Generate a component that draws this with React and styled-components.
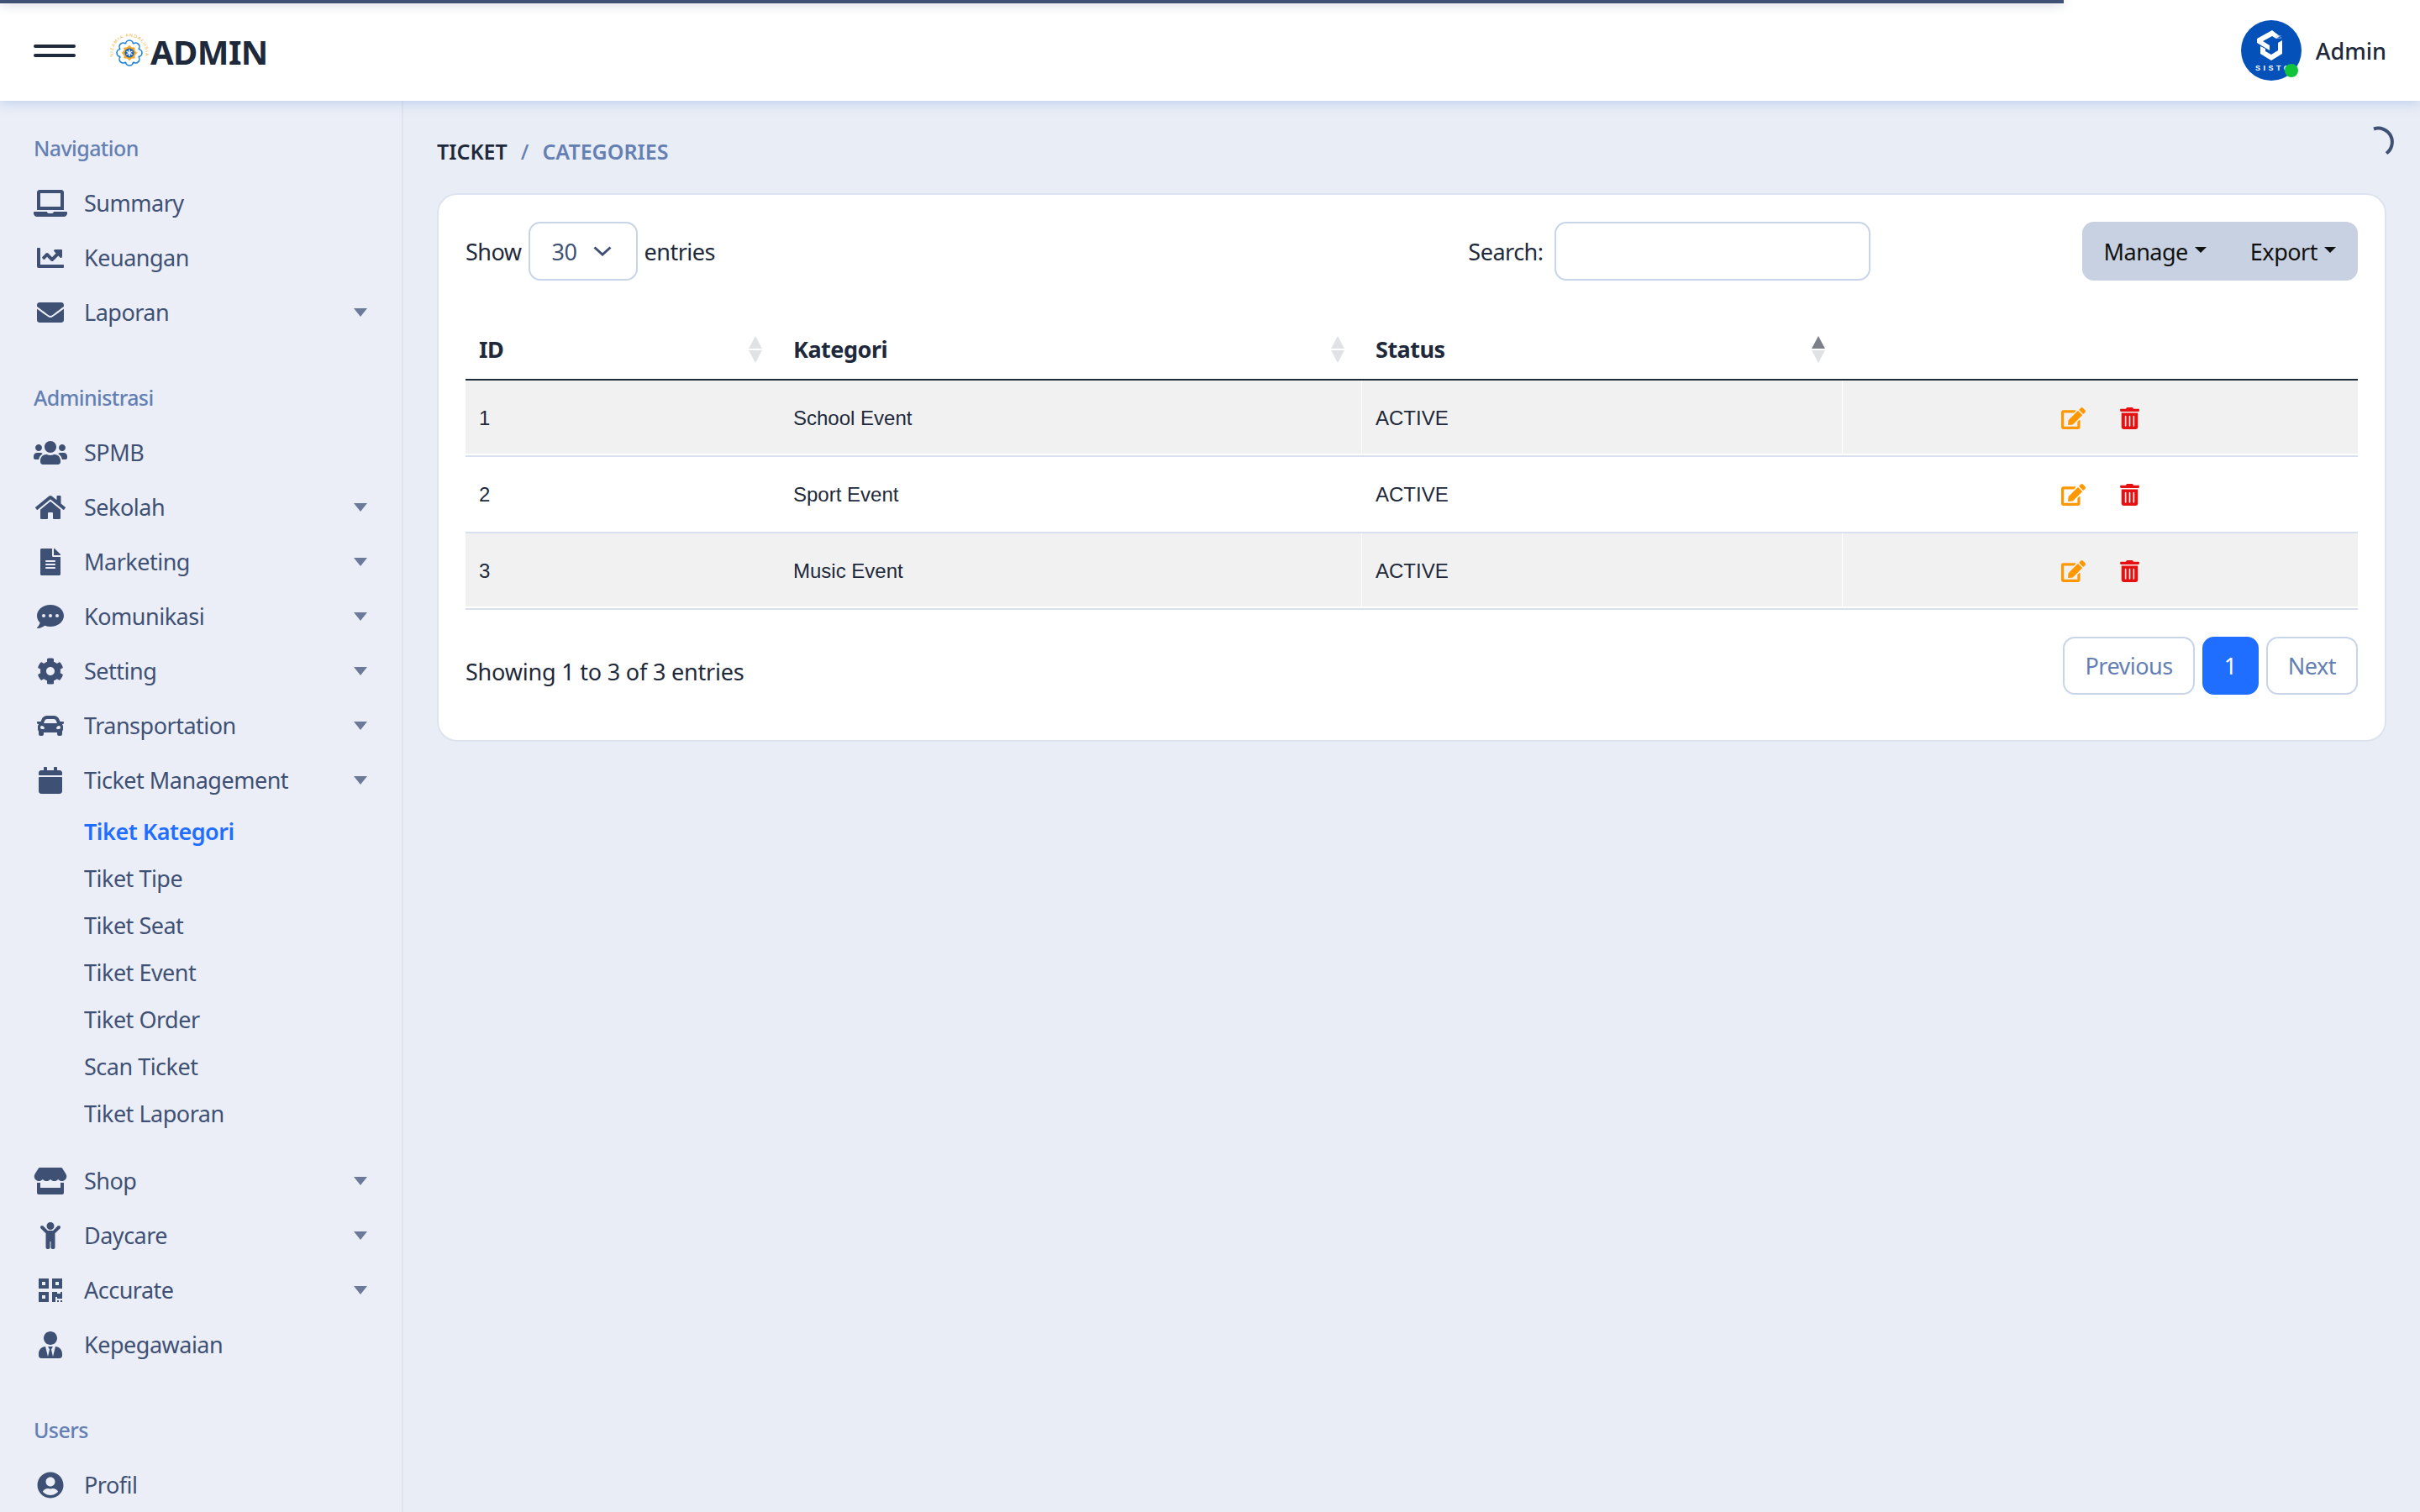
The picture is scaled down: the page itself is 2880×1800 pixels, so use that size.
import React from 'react'
import styled, { createGlobalStyle } from 'styled-components'
import {
  FaLaptop, FaChartLine, FaEnvelope, FaUsers, FaHome, FaFileAlt, FaCommentDots, FaCog, FaCar,
  FaCalendar, FaStore, FaChild, FaQrcode, FaUserTie, FaUserCircle, FaEdit, FaTrashAlt,
} from 'react-icons/fa'

const FONT = '"Noto Sans", "Open Sans", sans-serif'
const INK = '#1e293b'
const NAVY = '#3e5175'
const SLATE = '#6480b3'
const LINE = '#c8d4e8'

const navigation = [
  { label: 'Summary', icon: FaLaptop },
  { label: 'Keuangan', icon: FaChartLine },
  { label: 'Laporan', icon: FaEnvelope, caret: true },
]

const administrasi = [
  { label: 'SPMB', icon: FaUsers },
  { label: 'Sekolah', icon: FaHome, caret: true },
  { label: 'Marketing', icon: FaFileAlt, caret: true },
  { label: 'Komunikasi', icon: FaCommentDots, caret: true },
  { label: 'Setting', icon: FaCog, caret: true },
  { label: 'Transportation', icon: FaCar, caret: true },
  { label: 'Ticket Management', icon: FaCalendar, caret: true },
]

const tickets = ['Tiket Kategori', 'Tiket Tipe', 'Tiket Seat', 'Tiket Event', 'Tiket Order', 'Scan Ticket', 'Tiket Laporan']

const others = [
  { label: 'Shop', icon: FaStore, caret: true },
  { label: 'Daycare', icon: FaChild, caret: true },
  { label: 'Accurate', icon: FaQrcode, caret: true },
  { label: 'Kepegawaian', icon: FaUserTie },
]

const rows = [
  { id: 1, name: 'School Event' },
  { id: 2, name: 'Sport Event' },
  { id: 3, name: 'Music Event' },
]

const NavItem = ({ item }) => {
  const Icon = item.icon
  return (
    <Item>
      <IconSlot><Icon /></IconSlot>
      <ItemLabel>{item.label}</ItemLabel>
      {item.caret && <Caret />}
    </Item>
  )
}

const Logo = () => (
  <LogoSvg viewBox="0 0 48 40">
    <defs>
      <path id="logoArc" d="M4 27.500 A19.500 19.500 0 1 1 42 27.500" />
    </defs>
    <text fontFamily="Liberation Sans, sans-serif" fontSize="5.200" fill="#f5a623">
      <textPath href="#logoArc" textLength="68">NIZAMIA ANDALUSIA</textPath>
    </text>
    {[0, 45, 90, 135, 180, 225, 270, 315].map(a => (
      <circle key={a} cx="23" cy="12.500" r="4.500" fill="#fff" stroke="#1b82d6" strokeWidth="1.600" transform={`rotate(${a} 23 23)`} />
    ))}
    <circle cx="23" cy="23" r="11.500" fill="#fff" />
    <rect x="16.500" y="16.500" width="13" height="13" fill="#f5a623" />
    <rect x="16.500" y="16.500" width="13" height="13" fill="#f5a623" transform="rotate(45 23 23)" />
    <circle cx="23" cy="23" r="5.500" fill="#1565c0" />
    <path d="M23 19 v8 M19.500 21 l7 4 M26.500 21 l-7 4" stroke="#fff" strokeWidth="1.400" />
  </LogoSvg>
)

const AvatarMark = () => (
  <AvatarSvg viewBox="0 0 72 72">
    <path d="M37 12 L19 22 V27 L34 36 V30 L26 25 L37 19 L42 22 L46 19 z" fill="#fff" />
    <path d="M23 31 V40 L36 48 L49 40 V24 L44 27 V36 L36 41 L29 37 V34 z" fill="#fff" />
    <text x="41" y="22" fontFamily="Liberation Sans, sans-serif" fontSize="5" fill="#a9c4ee">SIS</text>
    <text x="17" y="60" fontFamily="Liberation Sans, sans-serif" fontSize="9" fontWeight="700" letterSpacing="3.500" fill="#fff">SISTO</text>
  </AvatarSvg>
)

const App = () => (
  <>
    <GlobalStyle />
    <ProgressBar />
    <Spinner viewBox="0 0 40 40">
      <path d="M9 6.500 A16.500 16.500 0 0 1 24 35.500" fill="none" stroke={NAVY} strokeWidth="4" />
    </Spinner>
    <Page>
      <Header>
        <HeaderLeft>
          <Burger><span /><span /></Burger>
          <Brand>
            <Logo />
            <BrandName>ADMIN</BrandName>
          </Brand>
        </HeaderLeft>
        <UserBox>
          <Avatar>
            <AvatarMark />
            <OnlineDot />
          </Avatar>
          <UserName>Admin</UserName>
        </UserBox>
      </Header>
      <Body>
        <Sidebar>
          <SectionLabel>Navigation</SectionLabel>
          {navigation.map(item => <NavItem key={item.label} item={item} />)}
          <SectionLabel $gap={52}>Administrasi</SectionLabel>
          {administrasi.map(item => <NavItem key={item.label} item={item} />)}
          <SubMenu>
            {tickets.map((label, i) => <SubItem key={label} $active={i === 0}>{label}</SubItem>)}
          </SubMenu>
          {others.map(item => <NavItem key={item.label} item={item} />)}
          <SectionLabel $gap={52}>Users</SectionLabel>
          <NavItem item={{ label: 'Profil', icon: FaUserCircle }} />
        </Sidebar>
        <Content>
          <Breadcrumb>
            <Crumb>TICKET</Crumb>
            <CrumbSep>/</CrumbSep>
            <CrumbNow>CATEGORIES</CrumbNow>
          </Breadcrumb>
          <Card>
            <Controls>
              <LengthBox>
                <span>Show</span>
                <SelectBox>
                  <span>30</span>
                  <Chevron viewBox="0 0 22 12">
                    <path d="M1.500 1.500 L11 10 L20.500 1.500" fill="none" stroke={NAVY} strokeWidth="3" />
                  </Chevron>
                </SelectBox>
                <span>entries</span>
              </LengthBox>
              <SearchBox>
                <span>Search:</span>
                <SearchInput />
              </SearchBox>
              <ButtonGroup>
                <GroupButton>Manage<ButtonCaret /></GroupButton>
                <GroupButton>Export<ButtonCaret /></GroupButton>
              </ButtonGroup>
            </Controls>
            <Table>
              <colgroup>
                <col style={{ width: 374 }} />
                <col style={{ width: 693 }} />
                <col style={{ width: 572 }} />
                <col />
              </colgroup>
              <thead>
                <tr>
                  <Th><HeadCell>ID<SortArrows /></HeadCell></Th>
                  <Th><HeadCell>Kategori<SortArrows /></HeadCell></Th>
                  <Th><HeadCell>Status<SortArrows $asc /></HeadCell></Th>
                  <Th />
                </tr>
              </thead>
              <tbody>
                {rows.map(row => (
                  <Row key={row.id} $striped={row.id % 2 === 1}>
                    <Td>{row.id}</Td>
                    <Td>{row.name}</Td>
                    <Td>ACTIVE</Td>
                    <Td>
                      <Actions>
                        <EditIcon />
                        <TrashIcon />
                      </Actions>
                    </Td>
                  </Row>
                ))}
              </tbody>
            </Table>
            <TableFooter>
              <TableInfo>Showing 1 to 3 of 3 entries</TableInfo>
              <Pagination>
                <PageButton>Previous</PageButton>
                <PageButton $active>1</PageButton>
                <PageButton>Next</PageButton>
              </Pagination>
            </TableFooter>
          </Card>
        </Content>
      </Body>
    </Page>
  </>
)

const GlobalStyle = createGlobalStyle`
  html, body {
    margin: 0;
    padding: 0;
    background: #e9edf6;
  }
  * {
    box-sizing: border-box;
  }
  body {
    font-family: ${FONT};
    font-size: 27px;
    letter-spacing: -0.5px;
    color: ${INK};
    overflow: hidden;
  }
`

const ProgressBar = styled.div`
  position: fixed;
  top: 0;
  left: 0;
  width: 2456px;
  height: 4px;
  background: ${NAVY};
  box-shadow: 0 0 14px rgba(62, 81, 117, 0.45);
  z-index: 5;
`

const Spinner = styled.svg`
  position: fixed;
  top: 147px;
  left: 2816px;
  width: 40px;
  height: 40px;
  z-index: 5;
`

const Page = styled.div`
  display: flex;
  flex-direction: column;
  height: 1800px;
  overflow: hidden;
`

const Header = styled.header`
  display: flex;
  align-items: center;
  justify-content: space-between;
  flex: 0 0 120px;
  padding: 0 40px;
  background: #fff;
  box-shadow: 0 2px 14px rgba(120, 160, 225, 0.42);
  position: relative;
  z-index: 2;
`

const HeaderLeft = styled.div`
  display: flex;
  align-items: center;
  gap: 41px;
`

const Burger = styled.div`
  display: flex;
  flex-direction: column;
  gap: 7px;
  width: 50px;

  span {
    display: block;
    height: 4px;
    border-radius: 2px;
    background: ${INK};
  }
`

const Brand = styled.div`
  display: flex;
  align-items: center;
`

const LogoSvg = styled.svg`
  width: 48px;
  height: 40px;
`

const BrandName = styled.span`
  padding-top: 3px;
  font-size: 40px;
  font-weight: 700;
  line-height: 1;
  letter-spacing: -0.6px;
  color: ${INK};
`

const UserBox = styled.div`
  display: flex;
  align-items: center;
  gap: 17px;
`

const Avatar = styled.div`
  position: relative;
  width: 72px;
  height: 72px;
  border-radius: 50%;
  background: #0451b9;
`

const AvatarSvg = styled.svg`
  display: block;
  width: 72px;
  height: 72px;
`

const OnlineDot = styled.span`
  position: absolute;
  left: 52px;
  top: 52px;
  width: 16px;
  height: 16px;
  border-radius: 50%;
  background: #10c23c;
`

const UserName = styled.span`
  font-size: 27px;
  font-weight: 500;
  letter-spacing: 0;
  color: ${INK};
`

const Body = styled.div`
  display: flex;
  flex: 1;
  min-height: 0;
`

const Sidebar = styled.aside`
  flex: 0 0 480px;
  padding: 39px 40px 0;
  background: #ebeef7;
  border-right: 2px solid #dfe4ef;
`

const SectionLabel = styled.div`
  display: flex;
  align-items: center;
  height: 34px;
  margin-top: ${props => props.$gap || 0}px;
  margin-bottom: 16px;
  font-size: 25px;
  font-weight: 500;
  letter-spacing: -0.6px;
  color: ${SLATE};
`

const Item = styled.div`
  display: flex;
  align-items: center;
  height: 65px;
  color: ${NAVY};
`

const IconSlot = styled.span`
  display: flex;
  align-items: center;
  justify-content: center;
  flex: 0 0 40px;
  margin-right: 20px;

  svg {
    width: 40px;
    height: 32px;
  }
`

const ItemLabel = styled.span`
  flex: 1;
  font-size: 27px;
`

const Caret = styled.span`
  margin-right: 1px;
  border-top: 10px solid #6b7a99;
  border-left: 8px solid transparent;
  border-right: 8px solid transparent;
`

const SubMenu = styled.div`
  display: flex;
  flex-direction: column;
  margin-bottom: 20px;
  padding-left: 60px;
`

const SubItem = styled.div`
  display: flex;
  align-items: center;
  height: 56px;
  font-size: 27px;
  font-weight: ${props => (props.$active ? 600 : 400)};
  color: ${props => (props.$active ? '#1f6eff' : NAVY)};
`

const Content = styled.main`
  flex: 1;
  padding: 42px 40px 0 40px;
  min-width: 0;
`

const Breadcrumb = styled.div`
  display: flex;
  align-items: center;
  gap: 16px;
  height: 36px;
  margin-bottom: 32px;
  font-size: 25px;
  font-weight: 600;
  letter-spacing: 0;
`

const Crumb = styled.span`
  color: ${INK};
`

const CrumbSep = styled.span`
  color: ${SLATE};
  font-weight: 500;
`

const CrumbNow = styled.span`
  color: ${SLATE};
`

const Card = styled.section`
  padding: 32px 32px 54px;
  background: #fff;
  border: 2px solid #dde3ef;
  border-radius: 24px;
`

const Controls = styled.div`
  display: flex;
  align-items: center;
  height: 70px;
`

const LengthBox = styled.div`
  display: flex;
  align-items: center;
  gap: 8px;
`

const SelectBox = styled.div`
  display: flex;
  align-items: center;
  width: 130px;
  height: 70px;
  padding: 0 26px;
  gap: 20px;
  border: 2px solid ${LINE};
  border-radius: 14px;
  color: ${NAVY};
`

const Chevron = styled.svg`
  width: 22px;
  height: 12px;
`

const SearchBox = styled.div`
  display: flex;
  align-items: center;
  gap: 13px;
  margin-left: auto;
`

const SearchInput = styled.div`
  width: 376px;
  height: 70px;
  border: 2px solid ${LINE};
  border-radius: 14px;
`

const ButtonGroup = styled.div`
  display: flex;
  margin-left: 252px;
  height: 70px;
  border-radius: 14px;
  background: #c8d1e2;
`

const GroupButton = styled.div`
  display: flex;
  align-items: center;
  gap: 8px;
  padding: 0 26px;
  color: #111;
`

const ButtonCaret = styled.span`
  margin-top: -4px;
  border-top: 7px solid #111;
  border-left: 7px solid transparent;
  border-right: 7px solid transparent;
`

const Table = styled.table`
  width: 100%;
  margin-top: 46px;
  border-collapse: separate;
  border-spacing: 0;
  table-layout: fixed;
`

const Th = styled.th`
  height: 73px;
  padding: 0 21px 0 16px;
  border-bottom: 2px solid ${INK};
  text-align: left;
  font-size: 27px;
  font-weight: 700;
  color: ${INK};
`

const HeadCell = styled.div`
  display: flex;
  align-items: center;
  justify-content: space-between;
`

const ArrowStack = styled.span`
  display: flex;
  flex-direction: column;
  gap: 2px;
`

const ArrowUp = styled.span`
  border-bottom: 15px solid ${props => (props.$on ? '#7c808a' : '#e0e2e6')};
  border-left: 8.500px solid transparent;
  border-right: 8.500px solid transparent;
`

const ArrowDown = styled.span`
  border-top: 15px solid #e0e2e6;
  border-left: 8.500px solid transparent;
  border-right: 8.500px solid transparent;
`

const SortArrows = ({ $asc }) => (
  <ArrowStack>
    <ArrowUp $on={$asc} />
    <ArrowDown />
  </ArrowStack>
)

const Row = styled.tr`
  background: ${props => (props.$striped ? '#f1f1f1' : '#fff')};

  td {
    box-shadow: ${props => (props.$striped ? 'inset 0 -2px 0 #fff' : 'none')};
  }
  td:nth-child(2), td:nth-child(3) {
    box-shadow: ${props => (props.$striped ? 'inset -1px -2px 0 #fff' : 'none')};
  }
`

const Td = styled.td`
  height: 91px;
  padding: 0 16px;
  border-bottom: 2px solid #dbe0ee;
  font-family: "Liberation Sans", Arial, sans-serif;
  font-size: 24px;
  letter-spacing: 0;
  color: ${INK};
`

const Actions = styled.div`
  display: flex;
  align-items: center;
  justify-content: center;
  gap: 41px;
`

const EditIcon = styled(FaEdit)`
  width: 29px;
  height: 26px;
  color: #ff9800;
`

const TrashIcon = styled(FaTrashAlt)`
  width: 23px;
  height: 26px;
  color: #e61010;
`

const TableFooter = styled.div`
  display: flex;
  align-items: flex-start;
  justify-content: space-between;
  margin-top: 32px;
`

const TableInfo = styled.span`
  margin-top: 23px;
  letter-spacing: -0.2px;
`

const Pagination = styled.div`
  display: flex;
  gap: 9px;
`

const PageButton = styled.div`
  display: flex;
  align-items: center;
  justify-content: center;
  height: 69px;
  min-width: ${props => (props.$active ? '67px' : '0')};
  padding: 0 24px;
  border: 2px solid ${props => (props.$active ? '#1f6eff' : LINE)};
  border-radius: 14px;
  background: ${props => (props.$active ? '#1f6eff' : '#fff')};
  color: ${props => (props.$active ? '#fff' : SLATE)};
`

export default App
